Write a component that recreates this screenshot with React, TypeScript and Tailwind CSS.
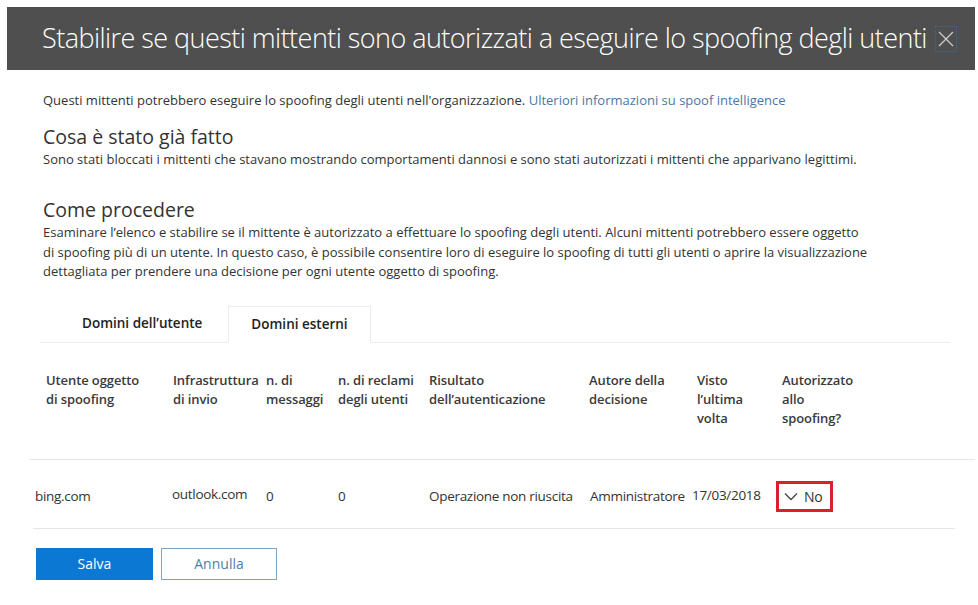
const headers = [
  { label: ["Utente oggetto", "di spoofing"], cls: "pl-[16px]" },
  { label: ["Infrastruttura", "di invio"], cls: "pl-[6px]" },
  { label: ["n. di", "messaggi"], cls: "pl-[5px]" },
  { label: ["n. di reclami", "degli utenti"], cls: "pl-[5px]" },
  { label: ["Risultato", "dell’autenticazione"], cls: "pl-[5px]" },
  { label: ["Autore della", "decisione"], cls: "pl-[5px]" },
  { label: ["Visto", "l’ultima", "volta"], cls: "pl-[10px]" },
  { label: ["Autorizzato", "allo", "spoofing?"], cls: "pl-[9px]" },
];

const row = [
  { text: "bing.com", cls: "pl-[2px]" },
  { text: "outlook.com", cls: "pl-[2px] -mt-[3px]" },
  { text: "0", cls: "pl-[2px]" },
  { text: "0", cls: "pl-[2px]" },
  { text: "Operazione non riuscita", cls: "pl-[2px]" },
  { text: "Amministratore", cls: "pl-[3px]" },
  { text: "17/03/2018", cls: "pl-[2px] -mt-[2px]" },
];

const cols = "grid grid-cols-[137px_94px_72px_91px_160px_103px_86px_1fr]";

export default function App() {
  return (
    <div className="w-[978px] h-[605px] bg-white pt-[7px] pl-[7px] text-[#333] font-['Open_Sans',sans-serif] overflow-hidden">
      <div className="w-[968px] h-[63px] bg-[#4f4f4f] flex items-center pl-[35px] pr-[18px]">
        <h1 className="flex-1 text-white text-[27px] font-light tracking-[-0.55px] whitespace-nowrap">
          Stabilire se questi mittenti sono autorizzati a eseguire lo spoofing degli utenti
        </h1>
        <button className="w-[22px] h-[26px] border border-dotted border-[#3a6a96] flex items-center justify-center text-[#cfcfcf]">
          <svg width="16" height="16" viewBox="0 0 16 16" fill="none" stroke="currentColor" strokeWidth="1.2">
            <path d="M1 1 L15 15 M15 1 L1 15" />
          </svg>
        </button>
      </div>

      <div className="pl-[36px] pt-[21px] text-[13px] leading-[19.5px]">
        <p>
          Questi mittenti potrebbero eseguire lo spoofing degli utenti nell'organizzazione.{" "}
          <a className="text-[#4a78a6]">Ulteriori informazioni su spoof intelligence</a>
        </p>
        <h2 className="mt-[12px] text-[19.5px] leading-[27px]">Cosa è stato già fatto</h2>
        <p>
          Sono stati bloccati i mittenti che stavano mostrando comportamenti dannosi e sono stati autorizzati i mittenti che apparivano legittimi.
        </p>
        <h2 className="mt-[27px] text-[19.5px] leading-[27px]">Come procedere</h2>
        <p className="whitespace-nowrap">
          Esaminare l’elenco e stabilire se il mittente è autorizzato a effettuare lo spoofing degli utenti. Alcuni mittenti potrebbero essere oggetto
          <br />
          di spoofing più di un utente. In questo caso, è possibile consentire loro di eseguire lo spoofing di tutti gli utenti o aprire la visualizzazione
          <br />
          dettagliata per prendere una decisione per ogni utente oggetto di spoofing.
        </p>
      </div>

      <div className="ml-[33px] mt-[24px] w-[910px] h-[37px] flex items-end border-b border-[#ececec] text-[13.5px] font-semibold text-[#222]">
        <div className="w-[188px] h-[36px] flex items-center pl-[42px]">Domini dell’utente</div>
        <div className="w-[143px] h-[37px] -mb-px bg-white border border-b-white border-[#ececec] flex items-center justify-center">
          Domini esterni
        </div>
      </div>

      <div className="ml-[23px] w-[945px] text-[13.5px] tracking-[-0.3px]">
        <div className={`${cols} pt-[28px] h-[117px] border-b border-[#e6e6e6] font-semibold tracking-[-0.1px] text-[13px] text-[#3a3a3a] leading-[19px]`}>
          {headers.map((h, i) => (
            <div key={i} className={h.cls}>
              {h.label.map((l, j) => (
                <div key={j} className="whitespace-nowrap">{l}</div>
              ))}
            </div>
          ))}
        </div>
        <div className={`${cols} items-center pt-[5px] h-[69px] w-[922px] ml-[3px] border-b border-[#e6e6e6]`}>
          {row.map((c, i) => (
            <div key={i} className={`${c.cls} whitespace-nowrap`}>{c.text}</div>
          ))}
          <div className="w-[57px] h-[31px] border-[3px] border-[#d9202d] flex items-center pl-[5px] gap-[6px]">
            <svg width="14" height="9" viewBox="0 0 14 9" fill="none" stroke="#444" strokeWidth="1.3">
              <path d="M1 1.5 L7 7.5 L13 1.5" />
            </svg>
            <span className="text-[14px]">No</span>
          </div>
        </div>
      </div>

      <div className="ml-[29px] mt-[19px] flex gap-[8px] text-[14px]">
        <button className="w-[117px] h-[32px] bg-[#0b78d3] text-white">Salva</button>
        <button className="w-[116px] h-[32px] border border-[#7ea6c4] text-[#4f7fa6]">Annulla</button>
      </div>
    </div>
  );
}
